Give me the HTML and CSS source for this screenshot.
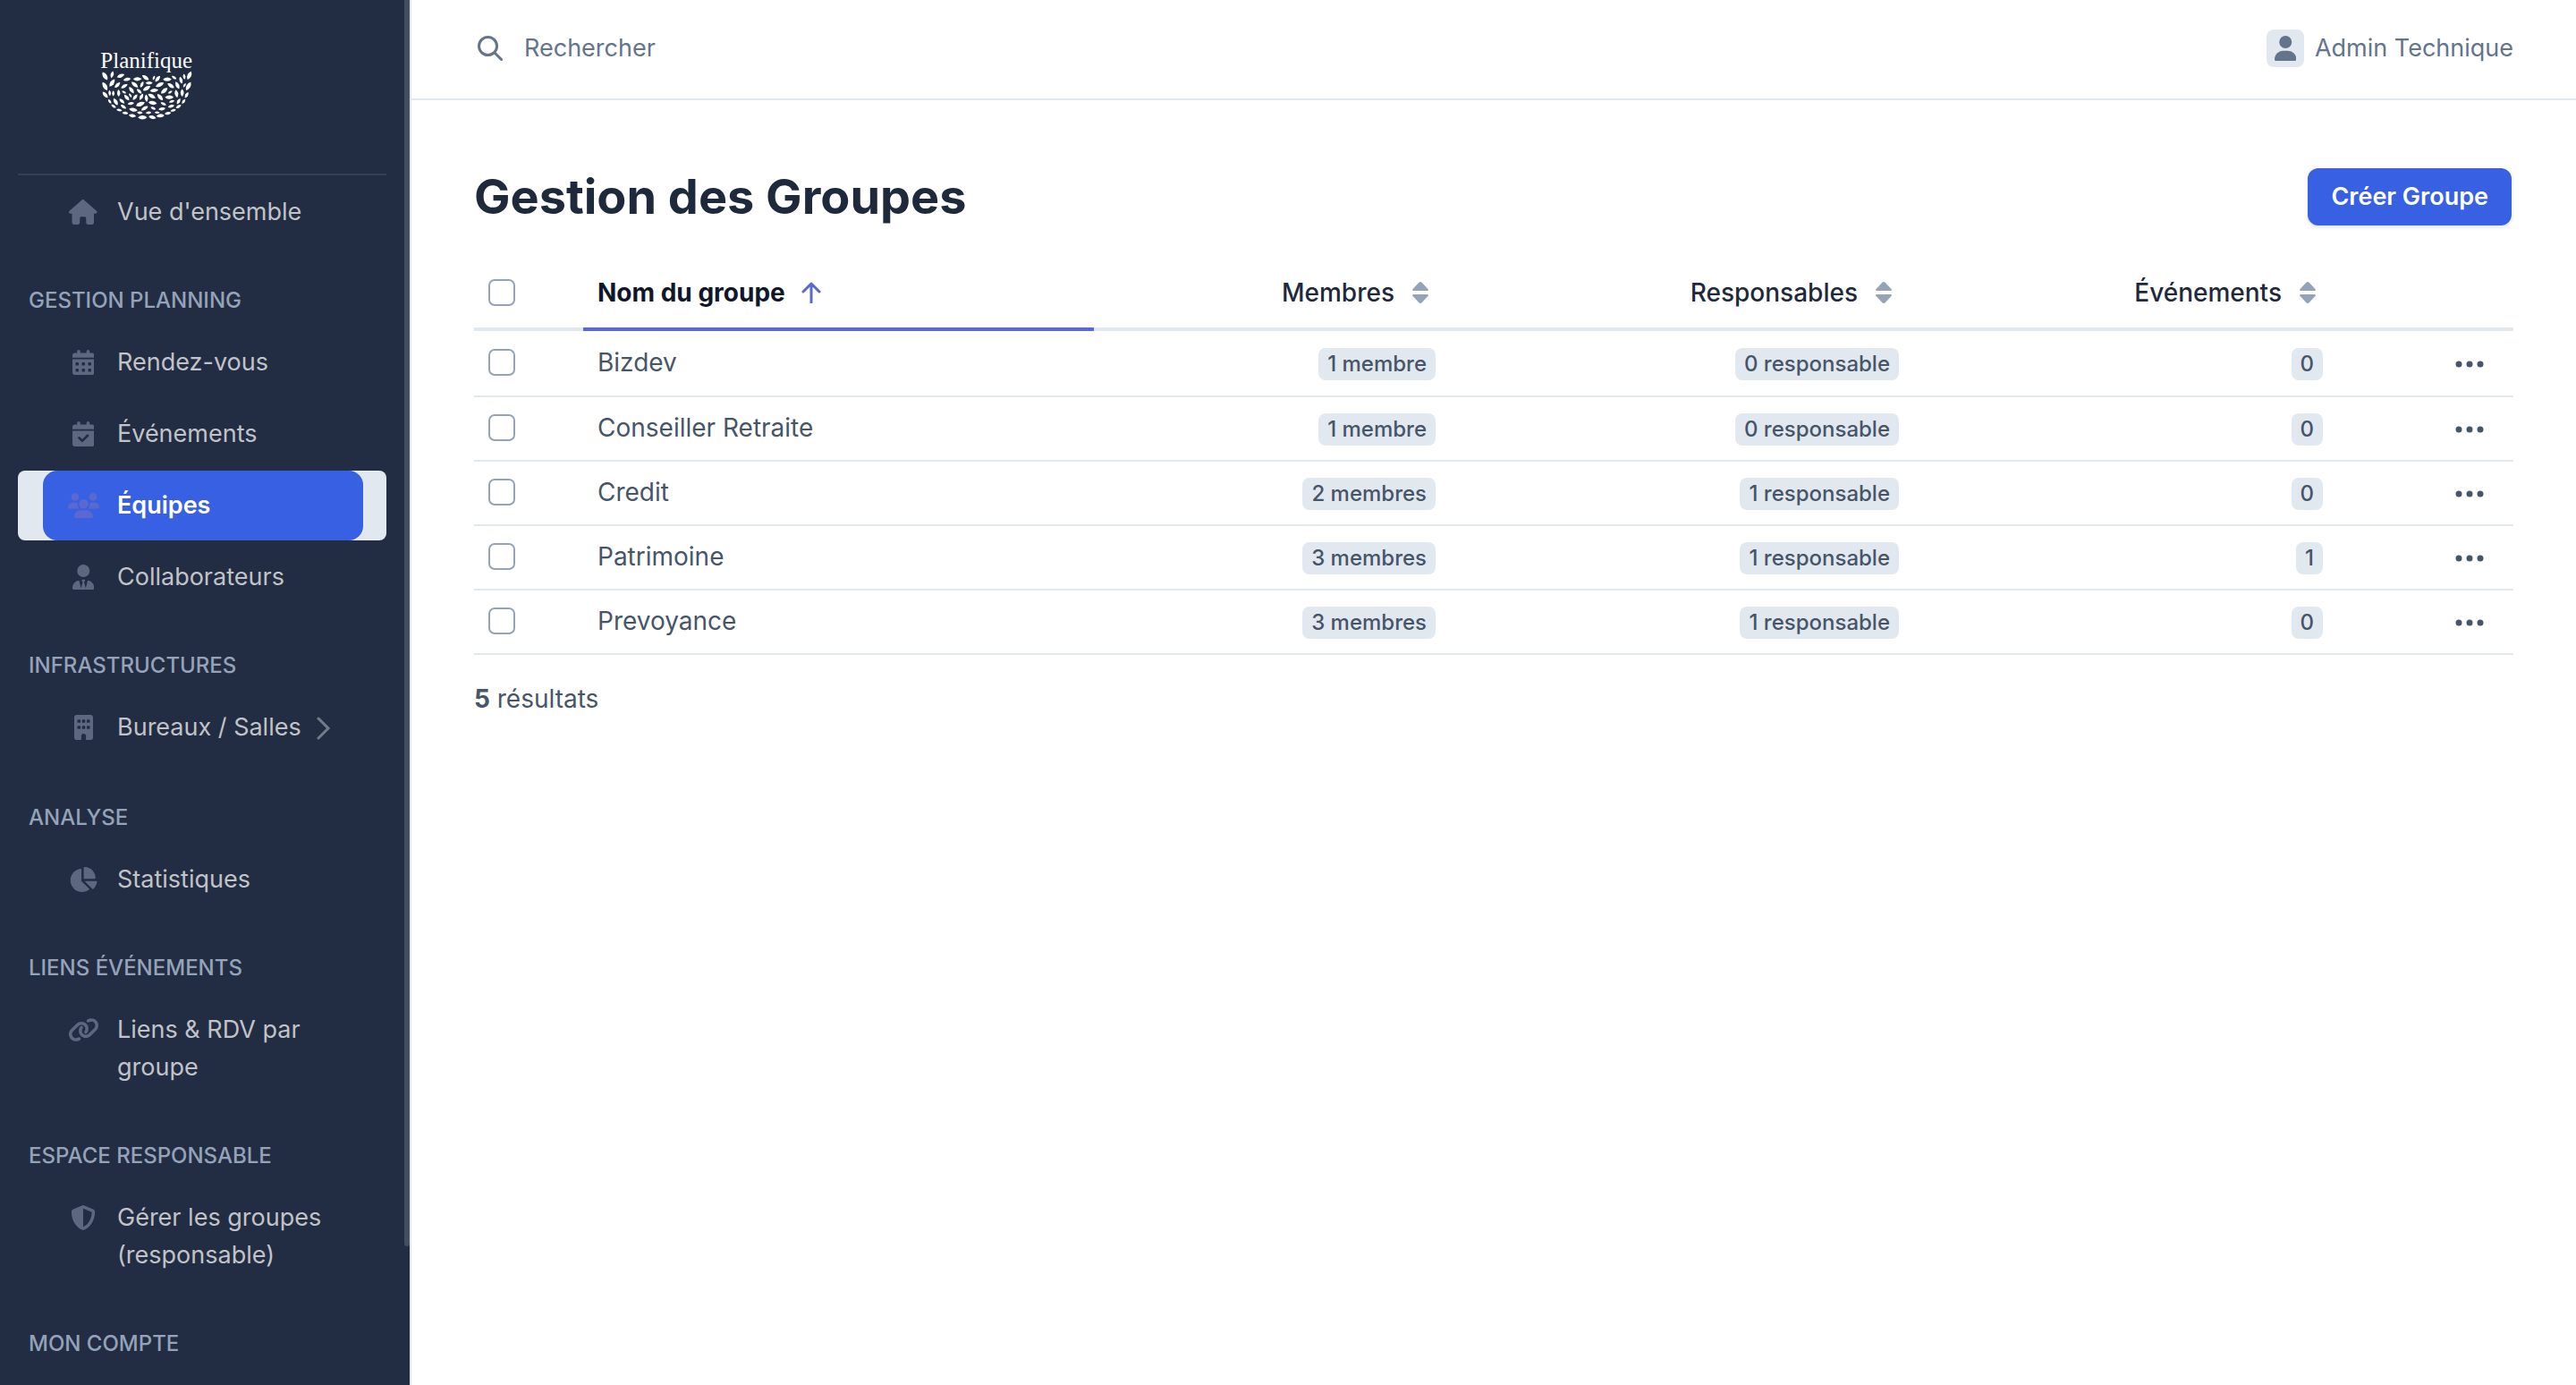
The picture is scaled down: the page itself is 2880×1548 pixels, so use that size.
FILE: index.html
```
<!DOCTYPE html>
<html lang="fr">
<head>
  <meta charset="UTF-8">
  <meta name="viewport" content="width=device-width, initial-scale=1.0">
  <title>Gestion des Groupes</title>
  <link rel="stylesheet" href="styles.css">
</head>
<body>
  <!-- Shared icons -->
  <svg class="sprite" aria-hidden="true">
    <symbol id="sort" viewBox="0 0 18 24"><path d="M9 0c.7 0 1.2.2 1.7.7l6.7 7.3c1.2 1.200.4 2-.9 2h-15C.2 10-.6 9.2.6 8L7.3.7C7.8.2 8.3 0 9 0zM9 24c-.7 0-1.200-.2-1.700-.7L.6 16C-.6 14.8.2 14 1.5 14h15c1.3 0 2.1.8.9 2l-6.700 7.3c-.5.5-1 .7-1.700.7z"/></symbol>
    <symbol id="dots" viewBox="0 0 32 8"><circle cx="4" cy="4" r="3.5"/><circle cx="16" cy="4" r="3.5"/><circle cx="28" cy="4" r="3.5"/></symbol>
    <path id="leaf" d="M-16 0Q-9-7 1-7Q11-6 16 0Q9 7-1 7Q-11 6-16 0z"/>
  </svg>

  <div class="wrapper">
    <aside class="sidebar">
      <a class="logo" href="#">
        <svg viewBox="336 160 310 246" role="img" aria-label="Planifique">
          <text x="336" y="229">Planifique</text>
          <use href="#leaf" transform="translate(351 256) rotate(60)"/>
          <use href="#leaf" transform="translate(375 251) rotate(-75) scale(.75)"/>
          <use href="#leaf" transform="translate(404 255) rotate(-20) scale(.85)"/>
          <use href="#leaf" transform="translate(425 267) rotate(-10) scale(.8)"/>
          <use href="#leaf" transform="translate(460 266) scale(.9)"/>
          <use href="#leaf" transform="translate(487 261) rotate(35) scale(.85)"/>
          <use href="#leaf" transform="translate(515 262) rotate(-70) scale(.5)"/>
          <use href="#leaf" transform="translate(528 265) rotate(-50) scale(.8)"/>
          <use href="#leaf" transform="translate(560 267) scale(.9)"/>
          <use href="#leaf" transform="translate(583 261) rotate(35) scale(.6)"/>
          <use href="#leaf" transform="translate(606 270) rotate(75) scale(.75)"/>
          <use href="#leaf" transform="translate(617 258) rotate(80) scale(.6)"/>
          <use href="#leaf" transform="translate(634 254) rotate(-65) scale(.95)"/>
          <use href="#leaf" transform="translate(351 290) rotate(60)"/>
          <use href="#leaf" transform="translate(375 279) rotate(-55) scale(.95)"/>
          <use href="#leaf" transform="translate(393 286) rotate(-45) scale(.8)"/>
          <use href="#leaf" transform="translate(416 290) rotate(-30) scale(.8)"/>
          <use href="#leaf" transform="translate(451 285) rotate(40) scale(.9)"/>
          <use href="#leaf" transform="translate(475 284) rotate(-65) scale(.7)"/>
          <use href="#leaf" transform="translate(499 279) scale(.75)"/>
          <use href="#leaf" transform="translate(491 297) rotate(-30) scale(.9)"/>
          <use href="#leaf" transform="translate(535 285) rotate(-25) scale(.95)"/>
          <use href="#leaf" transform="translate(572 288) rotate(35) scale(.85)"/>
          <use href="#leaf" transform="translate(594 287) rotate(65) scale(.85)"/>
          <use href="#leaf" transform="translate(618 287) rotate(-60) scale(.5)"/>
          <use href="#leaf" transform="translate(631 290) rotate(-60)"/>
          <use href="#leaf" transform="translate(352 319) rotate(50) scale(.85)"/>
          <use href="#leaf" transform="translate(367 313) rotate(85) scale(.6)"/>
          <use href="#leaf" transform="translate(379 314) rotate(90) scale(.6)"/>
          <use href="#leaf" transform="translate(397 313) rotate(90) scale(.75)"/>
          <use href="#leaf" transform="translate(415 310) rotate(30) scale(.5)"/>
          <use href="#leaf" transform="translate(440 303) rotate(55) scale(.85)"/>
          <use href="#leaf" transform="translate(466 307) rotate(45) scale(.7)"/>
          <use href="#leaf" transform="translate(516 304) rotate(-5) scale(.9)"/>
          <use href="#leaf" transform="translate(550 305) rotate(-40) scale(.9)"/>
          <use href="#leaf" transform="translate(570 310) rotate(-25) scale(.5)"/>
          <use href="#leaf" transform="translate(591 315) rotate(80) scale(.85)"/>
          <use href="#leaf" transform="translate(610 312) rotate(-90) scale(.8)"/>
          <use href="#leaf" transform="translate(625 320) rotate(-60) scale(.7)"/>
          <use href="#leaf" transform="translate(367 341) rotate(55) scale(.55)"/>
          <use href="#leaf" transform="translate(387 342) rotate(60) scale(.85)"/>
          <use href="#leaf" transform="translate(408 340) rotate(45) scale(.75)"/>
          <use href="#leaf" transform="translate(424 328) rotate(50) scale(.8)"/>
          <use href="#leaf" transform="translate(436 321) rotate(60) scale(.5)"/>
          <use href="#leaf" transform="translate(452 327) rotate(-50) scale(.75)"/>
          <use href="#leaf" transform="translate(473 326) rotate(-60) scale(.75)"/>
          <use href="#leaf" transform="translate(490 330) rotate(85) scale(.8)"/>
          <use href="#leaf" transform="translate(508 323) rotate(30) scale(.9)"/>
          <use href="#leaf" transform="translate(536 327) rotate(50) scale(.9)"/>
          <use href="#leaf" transform="translate(567 327) scale(.9)"/>
          <use href="#leaf" transform="translate(598 341) rotate(-60) scale(.7)"/>
          <use href="#leaf" transform="translate(615 341) rotate(-55) scale(.6)"/>
          <use href="#leaf" transform="translate(575 341) rotate(-15) scale(.6)"/>
          <use href="#leaf" transform="translate(380 357) rotate(35) scale(.6)"/>
          <use href="#leaf" transform="translate(413 359) rotate(35) scale(.7)"/>
          <use href="#leaf" transform="translate(438 348) rotate(-10) scale(.7)"/>
          <use href="#leaf" transform="translate(470 350) rotate(-20)"/>
          <use href="#leaf" transform="translate(511 346) rotate(10) scale(.9)"/>
          <use href="#leaf" transform="translate(547 349) rotate(25) scale(.65)"/>
          <use href="#leaf" transform="translate(573 357) rotate(-15) scale(.7)"/>
          <use href="#leaf" transform="translate(598 358) rotate(-30) scale(.65)"/>
          <use href="#leaf" transform="translate(399 370) rotate(10) scale(.6)"/>
          <use href="#leaf" transform="translate(446 369) rotate(10) scale(.9)"/>
          <use href="#leaf" transform="translate(484 364) rotate(-30) scale(.85)"/>
          <use href="#leaf" transform="translate(513 364) rotate(25) scale(.6)"/>
          <use href="#leaf" transform="translate(542 366) rotate(-10) scale(.75)"/>
          <use href="#leaf" transform="translate(580 371) rotate(-15) scale(.6)"/>
          <use href="#leaf" transform="translate(419 380) rotate(5) scale(.65)"/>
          <use href="#leaf" transform="translate(468 379) rotate(5) scale(.6)"/>
          <use href="#leaf" transform="translate(497 379) rotate(-5) scale(.6)"/>
          <use href="#leaf" transform="translate(526 378) scale(.55)"/>
          <use href="#leaf" transform="translate(562 381) rotate(-10) scale(.7)"/>
          <use href="#leaf" transform="translate(443 389) rotate(10) scale(.8)"/>
          <use href="#leaf" transform="translate(477 395) scale(.95)"/>
          <use href="#leaf" transform="translate(510 394) rotate(15) scale(.8)"/>
          <use href="#leaf" transform="translate(537 389) rotate(-5) scale(.85)"/>
        </svg>
      </a>

      <nav class="menu">
        <div class="menu-item">
          <a href="#"><span class="menu-icon"><svg viewBox="0 0 576 512"><path d="M575.8 255.5c0 18-15 32.1-32 32.1h-32l.7 160.2c0 2.7-.2 5.4-.5 8.1V472c0 22.1-17.9 40-40 40H456c-1.1 0-2.2 0-3.3-.1c-1.4 .1-2.8 .1-4.2 .1H416 392c-22.1 0-40-17.9-40-40V448 384c0-17.7-14.3-32-32-32H256c-17.7 0-32 14.3-32 32v64 24c0 22.1-17.9 40-40 40H160 128.1c-1.5 0-3-.1-4.5-.2c-1.2 .1-2.4 .2-3.6 .2H104c-22.1 0-40-17.9-40-40V360c0-.9 0-1.9 .1-2.8V287.6H32c-18 0-32-14-32-32.1c0-9 3-17 10-24L266.4 8c7-7 15-8 22-8s15 2 21 7L564.8 231.5c8 7 12 15 11 24z"/></svg></span><span>Vue d'ensemble</span></a>
        </div>

        <div class="menu-header">Gestion Planning</div>
        <div class="menu-item">
          <a href="#"><span class="menu-icon"><svg viewBox="0 0 448 512"><path fill-rule="evenodd" d="M128 0c17.7 0 32 14.3 32 32V64H288V32c0-17.7 14.3-32 32-32s32 14.3 32 32V64h48c26.5 0 48 21.5 48 48v48H0V112C0 85.5 21.5 64 48 64H96V32c0-17.7 14.3-32 32-32zM0 192H448V464c0 26.5-21.5 48-48 48H48c-26.5 0-48-21.5-48-48V192zm64 80v32c0 8.8 7.2 16 16 16h32c8.8 0 16-7.2 16-16V272c0-8.8-7.2-16-16-16H80c-8.8 0-16 7.2-16 16zm128 0v32c0 8.8 7.2 16 16 16h32c8.8 0 16-7.2 16-16V272c0-8.8-7.2-16-16-16H208c-8.8 0-16 7.2-16 16zm144-16c-8.8 0-16 7.2-16 16v32c0 8.8 7.2 16 16 16h32c8.8 0 16-7.2 16-16V272c0-8.8-7.2-16-16-16H336zM64 400v32c0 8.8 7.2 16 16 16h32c8.8 0 16-7.2 16-16V400c0-8.8-7.2-16-16-16H80c-8.8 0-16 7.2-16 16zm144-16c-8.8 0-16 7.2-16 16v32c0 8.8 7.2 16 16 16h32c8.8 0 16-7.2 16-16V400c0-8.8-7.2-16-16-16H208zm112 16v32c0 8.8 7.2 16 16 16h32c8.8 0 16-7.2 16-16V400c0-8.8-7.2-16-16-16H336c-8.8 0-16 7.2-16 16z"/></svg></span><span>Rendez-vous</span></a>
        </div>
        <div class="menu-item">
          <a href="#"><span class="menu-icon"><svg viewBox="0 0 448 512"><path fill-rule="evenodd" d="M128 0c17.7 0 32 14.3 32 32V64H288V32c0-17.7 14.3-32 32-32s32 14.3 32 32V64h48c26.5 0 48 21.5 48 48v48H0V112C0 85.5 21.5 64 48 64H96V32c0-17.7 14.3-32 32-32zM0 192H448V464c0 26.5-21.5 48-48 48H48c-26.5 0-48-21.5-48-48V192zM329 305c9.4-9.4 9.4-24.6 0-33.9s-24.6-9.4-33.9 0l-95 95-47-47c-9.4-9.4-24.6-9.4-33.9 0s-9.4 24.6 0 33.9l64 64c9.4 9.4 24.6 9.4 33.9 0L329 305z"/></svg></span><span>Événements</span></a>
        </div>
        <div class="menu-item active">
          <a href="#"><span class="menu-icon"><svg viewBox="0 0 640 512"><path d="M144 0a80 80 0 1 1 0 160A80 80 0 1 1 144 0zM512 0a80 80 0 1 1 0 160A80 80 0 1 1 512 0zM0 298.7C0 239.8 47.8 192 106.7 192h42.7c15.9 0 31 3.5 44.6 9.7c-1.3 7.2-1.9 14.7-1.9 22.3c0 38.2 16.8 72.5 43.3 96c-.2 0-.4 0-.7 0H21.3C9.6 320 0 310.4 0 298.7zM405.3 320c-.2 0-.4 0-.7 0c26.6-23.5 43.3-57.8 43.3-96c0-7.6-.7-15-1.9-22.3c13.6-6.3 28.7-9.7 44.6-9.7h42.7C592.2 192 640 239.8 640 298.7c0 11.8-9.6 21.3-21.3 21.3H405.3zM224 224a96 96 0 1 1 192 0 96 96 0 1 1 -192 0zM128 485.3C128 411.7 187.7 352 261.3 352H378.7C452.3 352 512 411.7 512 485.3c0 14.7-11.9 26.7-26.7 26.7H154.7c-14.7 0-26.7-11.9-26.7-26.7z"/></svg></span><span>Équipes</span></a>
        </div>
        <div class="menu-item">
          <a href="#"><span class="menu-icon"><svg viewBox="0 0 448 512"><path d="M96 128a128 128 0 1 0 256 0A128 128 0 1 0 96 128zm94.5 200.2l18.6 31L175.8 483.1l-36-146.9c-2-8.1-9.8-13.4-17.9-11.3C51.9 342.4 0 405.8 0 481.3c0 17 13.8 30.7 30.7 30.7H162.5c0 0 0 0 .1 0H168 280h5.5c0 0 0 0 .1 0H417.3c17 0 30.7-13.8 30.7-30.7c0-75.5-51.9-138.9-121.9-156.4c-8.1-2-15.9 3.3-17.9 11.3l-36 146.9L238.9 359.2l18.6-31c6.4-10.7-1.3-24.2-13.7-24.2H224 204.3c-12.4 0-20.1 13.6-13.7 24.2z"/></svg></span><span>Collaborateurs</span></a>
        </div>

        <div class="menu-header">Infrastructures</div>
        <div class="menu-item has-submenu">
          <a href="#"><span class="menu-icon"><svg viewBox="0 0 384 512"><path fill-rule="evenodd" d="M48 0C21.5 0 0 21.5 0 48V464c0 26.5 21.5 48 48 48h96V432c0-26.5 21.5-48 48-48s48 21.5 48 48v80h96c26.5 0 48-21.5 48-48V48c0-26.5-21.5-48-48-48H48zM80 96h32q16 0 16 16v32q0 16-16 16H80q-16 0-16-16v-32q0-16 16-16zM176 96h32q16 0 16 16v32q0 16-16 16h-32q-16 0-16-16v-32q0-16 16-16zM272 96h32q16 0 16 16v32q0 16-16 16h-32q-16 0-16-16v-32q0-16 16-16zM80 224h32q16 0 16 16v32q0 16-16 16H80q-16 0-16-16v-32q0-16 16-16zM176 224h32q16 0 16 16v32q0 16-16 16h-32q-16 0-16-16v-32q0-16 16-16zM272 224h32q16 0 16 16v32q0 16-16 16h-32q-16 0-16-16v-32q0-16 16-16z"/></svg></span><span>Bureaux / Salles</span><svg class="chevron" viewBox="0 0 16 26"><path d="M2 2l11 11L2 24"/></svg></a>
        </div>

        <div class="menu-header">Analyse</div>
        <div class="menu-item">
          <a href="#"><span class="menu-icon"><svg viewBox="0 0 576 512"><path d="M304 240V16.6c0-9 7-16.6 16-16.6C443.7 0 544 100.3 544 224c0 9-7.6 16-16.6 16H304zM32 272C32 150.7 122.1 50.3 239 34.3c9.2-1.3 17 6.1 17 15.4V288L412.5 444.5c6.7 6.7 6.2 17.7-1.5 23.1C371.8 495.6 323.8 512 272 512C139.5 512 32 404.6 32 272zm526.4 16c9.3 0 16.6 7.8 15.4 17c-7.7 55.9-34.6 105.6-73.9 142.3c-6 5.6-15.4 5.2-21.2-.7L320 288H558.4z"/></svg></span><span>Statistiques</span></a>
        </div>

        <div class="menu-header">Liens Événements</div>
        <div class="menu-item">
          <a href="#"><span class="menu-icon"><svg viewBox="0 0 640 512"><path d="M579.8 267.7c56.5-56.5 56.5-148 0-204.5c-50-50-128.8-56.5-186.3-15.4l-1.6 1.1c-14.4 10.3-17.7 30.3-7.4 44.6s30.3 17.7 44.6 7.4l1.6-1.1c32.1-22.9 76-19.3 103.8 8.6c31.5 31.5 31.5 82.5 0 114L422.3 334.8c-31.5 31.5-82.5 31.5-114 0c-27.9-27.9-31.5-71.8-8.6-103.8l1.1-1.6c10.3-14.4 6.9-34.4-7.4-44.6s-34.4-6.9-44.6 7.4l-1.1 1.6C206.5 251.2 213 330 263 380c56.5 56.5 148 56.5 204.5 0L579.8 267.7zM60.2 244.3c-56.5 56.5-56.5 148 0 204.5c50 50 128.8 56.5 186.3 15.4l1.6-1.1c14.4-10.3 17.7-30.3 7.4-44.6s-30.3-17.7-44.6-7.4l-1.6 1.1c-32.1 22.9-76 19.3-103.8-8.6C74 372 74 321 105.5 289.5L217.7 177.2c31.5-31.5 82.5-31.5 114 0c27.9 27.9 31.5 71.8 8.6 103.9l-1.1 1.6c-10.3 14.4-6.9 34.4 7.4 44.6s34.4 6.9 44.6-7.4l1.1-1.6C433.5 260.8 427 182 377 132c-56.5-56.5-148-56.5-204.5 0L60.2 244.3z"/></svg></span><span>Liens &amp; RDV par groupe</span></a>
        </div>

        <div class="menu-header">Espace Responsable</div>
        <div class="menu-item">
          <a href="#"><span class="menu-icon"><svg viewBox="0 0 512 512"><path fill-rule="evenodd" d="M256 0c4.6 0 9.2 1 13.4 2.9L457.7 82.8c22 9.3 38.4 31 38.3 57.2c-.5 99.2-41.3 280.7-213.6 363.2c-16.7 8-36.1 8-52.8 0C57.3 420.7 16.5 239.2 16 140c-.1-26.2 16.3-47.9 38.3-57.2L242.7 2.9C246.8 1 251.4 0 256 0zm0 66.8V444.8C394 378 431.1 230.1 432 141.4L256 66.8z"/></svg></span><span>Gérer les groupes (responsable)</span></a>
        </div>

        <div class="menu-header">Mon compte</div>
      </nav>
      <div class="scroll-thumb"></div>
    </aside>

    <div class="main">
      <header class="topbar">
        <form class="search">
          <label for="search"><svg viewBox="0 0 28 28"><circle cx="11.5" cy="11.5" r="10"/><path d="M19 19l7.5 7.5"/></svg></label>
          <input type="search" id="search" placeholder="Rechercher" aria-label="Rechercher">
        </form>
        <button class="user" type="button">
          <span class="avatar"><svg viewBox="0 0 448 512"><path d="M224 256A128 128 0 1 0 224 0a128 128 0 1 0 0 256zm-45.7 48C79.8 304 0 383.8 0 482.3C0 498.7 13.3 512 29.7 512H418.3c16.4 0 29.7-13.3 29.7-29.7C448 383.8 368.2 304 269.7 304H178.3z"/></svg></span>
          Admin Technique
        </button>
      </header>

      <main class="content">
        <div class="content-header">
          <h1>Gestion des Groupes</h1>
          <button class="btn" type="button">Créer Groupe</button>
        </div>

        <table class="datagrid">
          <colgroup>
            <col class="col-check">
            <col class="col-name">
            <col class="col-members">
            <col class="col-managers">
            <col class="col-events">
            <col class="col-actions">
          </colgroup>
          <thead>
            <tr>
              <th><input type="checkbox" aria-label="Tout sélectionner"></th>
              <th class="sorted"><a href="#">Nom du groupe <svg class="arrow" viewBox="0 0 22 24"><path d="M11 23V2M2 11l9-9 9 9"/></svg></a></th>
              <th class="num"><a href="#">Membres <svg class="sort"><use href="#sort"/></svg></a></th>
              <th class="num"><a href="#">Responsables <svg class="sort"><use href="#sort"/></svg></a></th>
              <th class="num"><a href="#">Événements <svg class="sort"><use href="#sort"/></svg></a></th>
              <th></th>
            </tr>
          </thead>
          <tbody>
            <tr>
              <td><input type="checkbox" aria-label="Bizdev"></td>
              <td>Bizdev</td>
              <td class="num"><span class="badge">1 membre</span></td>
              <td class="num"><span class="badge">0 responsable</span></td>
              <td class="num"><span class="badge">0</span></td>
              <td class="actions"><button type="button" aria-label="Actions"><svg><use href="#dots"/></svg></button></td>
            </tr>
            <tr>
              <td><input type="checkbox" aria-label="Conseiller Retraite"></td>
              <td>Conseiller Retraite</td>
              <td class="num"><span class="badge">1 membre</span></td>
              <td class="num"><span class="badge">0 responsable</span></td>
              <td class="num"><span class="badge">0</span></td>
              <td class="actions"><button type="button" aria-label="Actions"><svg><use href="#dots"/></svg></button></td>
            </tr>
            <tr>
              <td><input type="checkbox" aria-label="Credit"></td>
              <td>Credit</td>
              <td class="num"><span class="badge">2 membres</span></td>
              <td class="num"><span class="badge">1 responsable</span></td>
              <td class="num"><span class="badge">0</span></td>
              <td class="actions"><button type="button" aria-label="Actions"><svg><use href="#dots"/></svg></button></td>
            </tr>
            <tr>
              <td><input type="checkbox" aria-label="Patrimoine"></td>
              <td>Patrimoine</td>
              <td class="num"><span class="badge">3 membres</span></td>
              <td class="num"><span class="badge">1 responsable</span></td>
              <td class="num"><span class="badge">1</span></td>
              <td class="actions"><button type="button" aria-label="Actions"><svg><use href="#dots"/></svg></button></td>
            </tr>
            <tr>
              <td><input type="checkbox" aria-label="Prevoyance"></td>
              <td>Prevoyance</td>
              <td class="num"><span class="badge">3 membres</span></td>
              <td class="num"><span class="badge">1 responsable</span></td>
              <td class="num"><span class="badge">0</span></td>
              <td class="actions"><button type="button" aria-label="Actions"><svg><use href="#dots"/></svg></button></td>
            </tr>
          </tbody>
        </table>

        <p class="results"><strong>5</strong> résultats</p>
      </main>
    </div>
  </div>
</body>
</html>
```
FILE: styles.css
```
* {
  box-sizing: border-box;
}
body {
  margin: 0;
  font-family: Inter, "Liberation Sans", sans-serif;
  font-size: 27px;
  line-height: 42px;
  color: #475569;
  background: #fff;
}
a {
  color: inherit;
  text-decoration: none;
}
button {
  font: inherit;
  border: none;
  background: none;
  cursor: pointer;
}
.sprite {
  position: absolute;
  width: 0;
  height: 0;
}
.wrapper {
  display: flex;
  min-height: 100vh;
}

/* Sidebar */
.sidebar {
  position: sticky;
  top: 0;
  flex: none;
  width: 460px;
  height: 100vh;
  padding: 0 26px 0 20px;
  overflow: hidden;
  background: #222d43;
  border-right: 2px solid #e2e8f0;
}
.logo {
  display: block;
  height: 196px;
  padding: 53px 92px 0;
  border-bottom: 2px solid #334052;
}
.logo svg {
  display: block;
  width: 104px;
  height: 82px;
  fill: #fff;
}
.logo text {
  font-family: "Liberation Serif", serif;
  font-size: 75px;
}
.menu {
  padding-top: 2px;
}
.menu-header {
  padding: 40px 12px 12px;
  font-size: 24px;
  line-height: 36px;
  font-weight: 500;
  text-transform: uppercase;
  color: #94a3b8;
}
.menu-item {
  margin-bottom: 2px;
  border-radius: 8px;
}
.menu-item a {
  display: flex;
  gap: 17px;
  margin: 0 26px 0 28px;
  padding: 18px 24px;
  border-radius: 16px;
  color: #c1c3c8;
}
.menu-item.has-submenu {
  padding-bottom: 2px;
}
.menu-icon {
  display: flex;
  flex: none;
  align-items: center;
  justify-content: center;
  width: 42px;
  height: 42px;
}
.menu-icon svg {
  height: 28px;
  fill: #5c6880;
}
.menu-item.active {
  background: #e2e8f0;
}
.menu-item.active a {
  background: #3760e3;
  color: #fff;
  font-weight: 600;
}
.menu-item.active svg {
  fill: #5a68cf;
}
.menu-item .chevron {
  width: 16px;
  height: 26px;
  margin-top: 9px;
  fill: none;
  stroke: #747c8b;
  stroke-width: 3;
  stroke-linecap: round;
}
.scroll-thumb {
  position: absolute;
  top: 0;
  right: 0;
  width: 6px;
  height: 90%;
  background: #434e5f;
  border-radius: 0 0 3px 3px;
}

/* Top bar */
.main {
  flex: 1;
  min-width: 0;
}
.topbar {
  display: flex;
  align-items: center;
  justify-content: space-between;
  height: 112px;
  padding: 0 70px 2px 74px;
  border-bottom: 2px solid #e2e8f0;
}
.search {
  display: flex;
  flex: 1;
  align-items: center;
  gap: 24px;
}
.search label {
  display: flex;
}
.search svg {
  width: 28px;
  height: 28px;
  fill: none;
  stroke: #64748b;
  stroke-width: 3;
  stroke-linecap: round;
}
.search input {
  flex: 1;
  padding: 0;
  border: none;
  outline: none;
  background: none;
  font: inherit;
}
.search input::placeholder {
  color: #64748b;
}
.user {
  display: flex;
  align-items: center;
  gap: 12px;
  padding: 0;
  color: #64748b;
}
.avatar {
  display: flex;
  align-items: center;
  justify-content: center;
  width: 42px;
  height: 42px;
  border-radius: 8px;
  background: #e2e8f0;
}
.avatar svg {
  height: 28px;
  fill: #64748b;
}

/* Content */
.content {
  padding: 76px 70px;
  font-size: 28px;
}
.content-header {
  display: flex;
  align-items: center;
  justify-content: space-between;
  padding-right: 2px;
  margin-bottom: 36px;
}
h1 {
  margin: 0;
  font-size: 54px;
  line-height: 64px;
  font-weight: 700;
  color: #1e293b;
}
.btn {
  height: 64px;
  padding: 0 26px;
  border-radius: 12px;
  background: #3760e3;
  box-shadow: 0 2px 4px rgba(0, 0, 0, 0.12);
  color: #fff;
  font-size: 27px;
  font-weight: 600;
}

/* Table */
.datagrid {
  width: 100%;
  table-layout: fixed;
  border-collapse: separate;
  border-spacing: 0;
}
.col-check { width: 122px; }
.col-name { width: 571px; }
.col-members { width: 398px; }
.col-managers { width: 518px; }
.col-events { width: 474px; }
.col-actions { width: 197px; }
.datagrid th {
  height: 82px;
  padding: 0 16px;
  border-bottom: 4px solid #e2e8f0;
  font-weight: 500;
  text-align: left;
  color: #1e293b;
}
.datagrid th.sorted {
  border-bottom-color: #5a68cf;
  font-weight: 700;
  color: #0f172a;
}
.datagrid th a {
  display: inline-flex;
  align-items: center;
}
.datagrid td {
  height: 72px;
  padding: 0 16px 2px;
  border-bottom: 2px solid #e2e8f0;
}
.datagrid tbody tr:first-child td {
  height: 74px;
}
.datagrid .num {
  text-align: right;
}
.datagrid th.num {
  padding-right: 24px;
}
.datagrid input {
  display: block;
  appearance: none;
  width: 30px;
  height: 30px;
  margin: 0;
  border: 2px solid #94a3b8;
  border-radius: 7px;
  background: #fff;
}
.arrow {
  width: 22px;
  height: 24px;
  margin-left: 18px;
  fill: none;
  stroke: #5a68cf;
  stroke-width: 3;
  stroke-linecap: round;
  stroke-linejoin: round;
}
.sort {
  width: 18px;
  height: 24px;
  margin-left: 20px;
  fill: #94a3b8;
}
.badge {
  display: inline-block;
  padding: 0 10px;
  border-radius: 8px;
  background: #e2e8f0;
  font-size: 24px;
  line-height: 36px;
  font-weight: 500;
  vertical-align: middle;
}
.datagrid .actions {
  padding-right: 32px;
  text-align: right;
}
.actions button {
  display: inline-flex;
  padding: 0;
  vertical-align: middle;
}
.actions svg {
  width: 34px;
  height: 8px;
  fill: #475569;
}
.results {
  margin: 28px 0 0;
}
```
